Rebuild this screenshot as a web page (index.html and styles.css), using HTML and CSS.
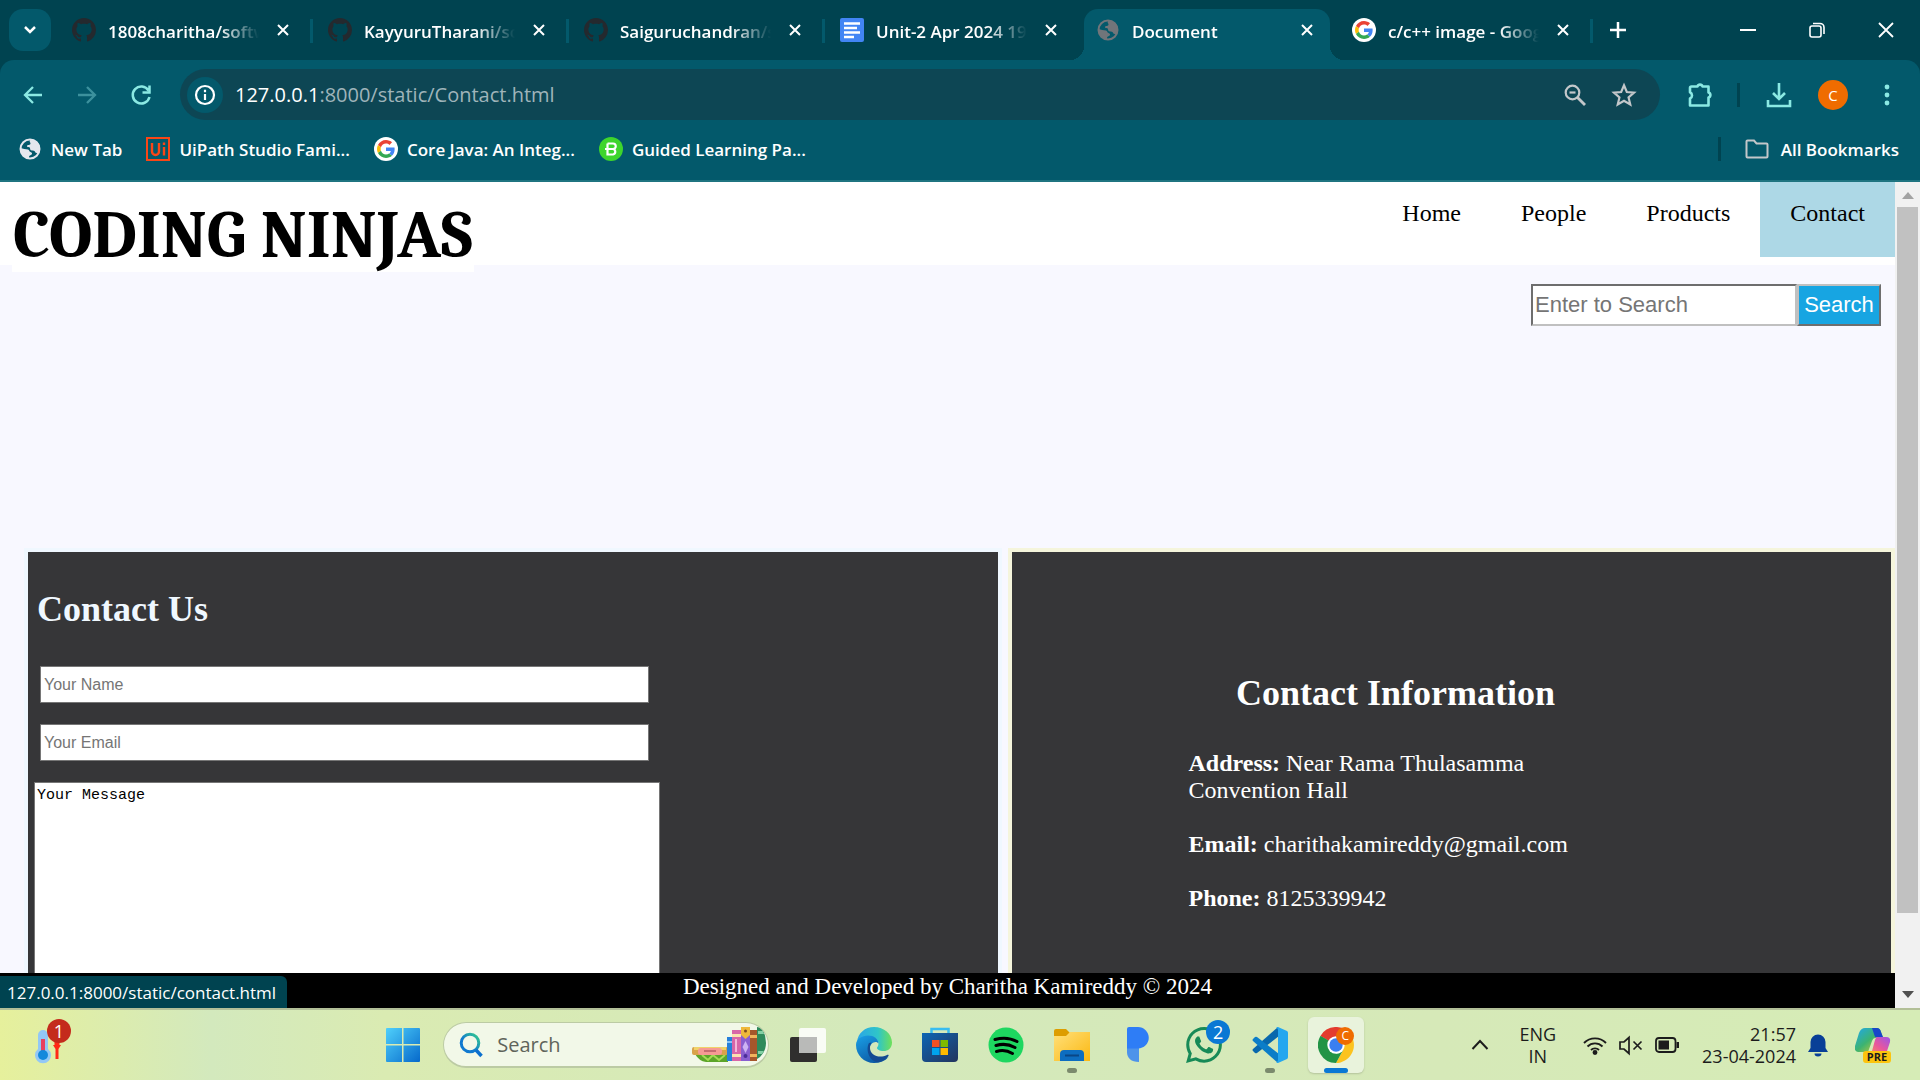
FILE: index.html
```html
<!DOCTYPE html>
<html lang="en">
<head>
<meta charset="utf-8">
<title>Document</title>
<link rel="stylesheet" href="styles.css">
</head>
<body>
<svg class="sprite" aria-hidden="true">
  <symbol id="github" viewBox="0 0 16 16"><path fill="#24292e" d="M8 0C3.58 0 0 3.58 0 8c0 3.54 2.29 6.53 5.47 7.59.4.07.55-.17.55-.38 0-.19-.01-.82-.01-1.49-2.01.37-2.53-.49-2.69-.94-.09-.23-.48-.94-.82-1.13-.28-.15-.68-.52-.01-.53.63-.01 1.08.58 1.23.82.72 1.21 1.87.87 2.33.66.07-.52.28-.87.51-1.07-1.78-.2-3.64-.89-3.64-3.95 0-.87.31-1.59.82-2.15-.08-.2-.36-1.02.08-2.12 0 0 .67-.21 2.2.82.64-.18 1.32-.27 2-.27s1.36.09 2 .27c1.53-1.04 2.2-.82 2.2-.82.44 1.1.16 1.92.08 2.12.51.56.82 1.27.82 2.15 0 3.07-1.87 3.75-3.65 3.95.29.25.54.73.54 1.48 0 1.07-.01 1.93-.01 2.2 0 .21.15.46.55.38A8.01 8.01 0 0 0 16 8c0-4.42-3.58-8-8-8z"/></symbol>
  <symbol id="google" viewBox="0 0 24 24"><circle cx="12" cy="12" r="12" fill="#fff"/><g transform="translate(3 3) scale(.375)"><path fill="#ea4335" d="M24 9.500c3.540 0 6.710 1.220 9.210 3.600l6.850-6.850C35.900 2.380 30.470 0 24 0 14.620 0 6.510 5.380 2.560 13.220l7.980 6.190C12.430 13.720 17.740 9.500 24 9.500z"/><path fill="#4285f4" d="M46.980 24.550c0-1.570-.15-3.090-.38-4.550H24v9.020h12.940c-.58 2.960-2.260 5.480-4.780 7.180l7.730 6c4.510-4.180 7.090-10.360 7.090-17.650z"/><path fill="#fbbc05" d="M10.530 28.590c-.48-1.450-.76-2.990-.76-4.590s.27-3.140.76-4.590l-7.980-6.190C.92 16.460 0 20.120 0 24c0 3.880.92 7.540 2.560 10.780l7.970-6.190z"/><path fill="#34a853" d="M24 48c6.480 0 11.930-2.130 15.890-5.810l-7.730-6c-2.150 1.450-4.920 2.300-8.160 2.300-6.260 0-11.570-4.220-13.470-9.910l-7.980 6.190C6.510 42.620 14.620 48 24 48z"/></g></symbol>
  <symbol id="globe" viewBox="0 0 24 24"><circle cx="12" cy="12" r="9.500" fill="none" stroke="currentColor" stroke-width="2"/><path fill="currentColor" d="M12.500 2.500c5.500 0 9.500 4 9.500 9.500 0 1.500-.5 3-1 4-1.500.5-3.500.3-4-1.200-.5-1.300-1.800-1.300-3-1.300-1.700 0-2-1.500-2-2.500s-1.500-.5-2.500-1c-.8-.5-.5-1.800.5-2 1-.1 2.500 0 2.500-1.500 0-1.300-1-1.500-.8-2.500zM2.500 11c2.500 1 5 1 7.500 1.500 1.500.5 1 2 2.500 2.500 1.500.4 2 1.500 1.200 2.500-1 1-2.700 1-2.700 2.500V21.500C6 21 2.500 17 2.500 11z"/></symbol>
  <symbol id="close" viewBox="0 0 18 18"><path d="M4 4l10 10M14 4L4 14" stroke="currentColor" stroke-width="2" fill="none"/></symbol>
</svg>

<header class="browser">
  <div class="tabstrip">
    <button class="tab-search" aria-label="Search tabs"><svg width="24" height="24" viewBox="0 0 24 24"><path d="M7 9l5 5 5-5" fill="none" stroke="#fff" stroke-width="2.500"/></svg></button>
    <div class="tab"><svg class="favicon"><use href="#github"/></svg><span class="tab-title">1808charitha/software</span><button class="tab-close" aria-label="Close tab"><svg><use href="#close"/></svg></button></div>
    <i class="sep"></i>
    <div class="tab"><svg class="favicon"><use href="#github"/></svg><span class="tab-title">KayyuruTharani/software</span><button class="tab-close" aria-label="Close tab"><svg><use href="#close"/></svg></button></div>
    <i class="sep"></i>
    <div class="tab"><svg class="favicon"><use href="#github"/></svg><span class="tab-title">Saiguruchandran/software</span><button class="tab-close" aria-label="Close tab"><svg><use href="#close"/></svg></button></div>
    <i class="sep"></i>
    <div class="tab"><svg class="favicon" viewBox="0 0 24 24"><rect width="24" height="24" rx="2" fill="#4285f4"/><path d="M4 5.500h16M4 10h13M4 14.500h16M4 19h10" stroke="#fff" stroke-width="2.500"/></svg><span class="tab-title">Unit-2 Apr 2024 19ECS</span><button class="tab-close" aria-label="Close tab"><svg><use href="#close"/></svg></button></div>
    <i class="sep clear"></i>
    <div class="tab active"><svg class="favicon grey"><use href="#globe"/></svg><span class="tab-title">Document</span><button class="tab-close" aria-label="Close tab"><svg><use href="#close"/></svg></button></div>
    <i class="sep clear"></i>
    <div class="tab"><svg class="favicon"><use href="#google"/></svg><span class="tab-title">c/c++ image - Google</span><button class="tab-close" aria-label="Close tab"><svg><use href="#close"/></svg></button></div>
    <i class="sep"></i>
    <button class="new-tab" aria-label="New tab"><svg width="20" height="20" viewBox="0 0 20 20"><path d="M10 2v16M2 10h16" stroke="#fff" stroke-width="2.500"/></svg></button>
    <div class="window-buttons">
      <button aria-label="Minimize"><svg width="16" height="16" viewBox="0 0 16 16"><path d="M0 8h16" stroke="#fff" stroke-width="2"/></svg></button>
      <button aria-label="Restore"><svg width="16" height="16" viewBox="0 0 16 16" fill="none" stroke="#fff" stroke-width="1.600"><rect x="1" y="4" width="11" height="11" rx="2"/><path d="M4 1.500h7a4 4 0 0 1 4 4V12"/></svg></button>
      <button aria-label="Close"><svg width="16" height="16" viewBox="0 0 16 16"><path d="M1 1l14 14M15 1L1 15" stroke="#fff" stroke-width="1.800"/></svg></button>
    </div>
  </div>

  <div class="toolbar">
    <button aria-label="Back"><svg width="24" height="24" viewBox="0 0 24 24"><path d="M21 12H4M12 4l-8 8 8 8" fill="none" stroke="#8be9e3" stroke-width="2.300"/></svg></button>
    <button aria-label="Forward"><svg width="24" height="24" viewBox="0 0 24 24"><path d="M3 12h17M12 4l8 8-8 8" fill="none" stroke="#3c919d" stroke-width="2.300"/></svg></button>
    <button class="reload" aria-label="Reload"><svg width="24" height="24" viewBox="0 0 24 24"><path d="M19.500 7.500A8.500 8.500 0 1 0 20.500 14M20.500 2.500v7h-7" fill="none" stroke="#8be9e3" stroke-width="2.500"/></svg></button>
    <div class="omnibox">
      <span class="info"><svg width="22" height="22" viewBox="0 0 22 22"><circle cx="11" cy="11" r="9" fill="none" stroke="#fff" stroke-width="2.200"/><path d="M11 10v6M11 5.800v2.400" stroke="#fff" stroke-width="2.200"/></svg></span>
      <span class="url"><b>127.0.0.1</b>:8000/static/Contact.html</span>
      <button aria-label="Zoom"><svg width="24" height="24" viewBox="0 0 24 24" fill="none" stroke="#c3c7ca" stroke-width="2.200"><circle cx="9.500" cy="9.500" r="6.800"/><path d="M6.500 9.500h6"/><path d="M14.500 14.500l7.500 7.500" stroke-width="2.800"/></svg></button>
      <button aria-label="Bookmark"><svg width="26" height="26" viewBox="0 0 24 24"><path d="M12 3l2.600 6.200 6.700.6-5.100 4.400 1.600 6.600-5.800-3.500-5.800 3.500 1.600-6.600-5.100-4.400 6.700-.6z" fill="none" stroke="#c3c7ca" stroke-width="2"/></svg></button>
    </div>
    <button class="ext" aria-label="Extensions"><svg width="28" height="28" viewBox="0 0 28 28"><path d="M5.500 5.500H11.500a2.600 2.600 0 0 1 5 0H22.500V11.500a2.600 2.600 0 0 1 0 5V24.500H4V17.500a3.400 3.400 0 0 0 0-6.200V7a1.500 1.500 0 0 1 1.500-1.500z" fill="none" stroke="#8be9e3" stroke-width="2.600" stroke-linejoin="round"/></svg></button>
    <i class="divider"></i>
    <button class="dl" aria-label="Downloads"><svg width="26" height="26" viewBox="0 0 26 26"><path d="M13 1v15M7 11l6 6 6-6M2 18v6h22v-6" fill="none" stroke="#8be9e3" stroke-width="2.600"/></svg></button>
    <button class="avatar" aria-label="Profile">C</button>
    <button class="menu" aria-label="Menu"><svg width="6" height="24" viewBox="0 0 6 24" fill="#8be9e3"><circle cx="3" cy="4" r="2.400"/><circle cx="3" cy="12" r="2.400"/><circle cx="3" cy="20" r="2.400"/></svg></button>
  </div>

  <nav class="bookmarks" aria-label="Bookmarks">
    <a href="#"><svg class="favicon pale"><use href="#globe"/></svg>New Tab</a>
    <a href="#"><svg class="favicon" viewBox="0 0 24 24" fill="none" stroke="#fa4616"><rect x="1" y="1" width="22" height="22" stroke-width="2"/><path d="M6 6v8.500a3.500 3.500 0 0 0 7 0V6M18 10v8.500M18 5.500v2.500" stroke-width="2.400"/></svg>UiPath Studio Fami...</a>
    <a href="#"><svg class="favicon"><use href="#google"/></svg>Core Java: An Integ...</a>
    <a href="#"><svg class="favicon" viewBox="0 0 24 24"><circle cx="12" cy="12" r="12" fill="#3ed52c"/><path d="M8.500 6.500H14a2.700 2.700 0 0 1 0 5.500H6M14 12a2.800 2.800 0 0 1 0 5.500H8.500V6.500" fill="none" stroke="#fff" stroke-width="2.200"/></svg>Guided Learning Pa...</a>
    <i class="divider"></i>
    <a href="#"><svg class="favicon" viewBox="0 0 24 24"><path d="M1.500 4.500a1 1 0 0 1 1-1H9l2.500 3H21.500a1 1 0 0 1 1 1V19.500a1 1 0 0 1-1 1h-19a1 1 0 0 1-1-1z" fill="none" stroke="#c3c7ca" stroke-width="2"/></svg>All Bookmarks</a>
  </nav>
</header>

<div class="viewport">
  <div class="page">
    <header class="site-header">
      <h1 class="brand">CODING NINJAS</h1>
      <nav class="site-nav">
        <a href="#">Home</a><a href="#">People</a><a href="#">Products</a><a href="#" class="current">Contact</a>
      </nav>
    </header>
    <form class="search">
      <input type="text" placeholder="Enter to Search" aria-label="Search the site"><button type="button">Search</button>
    </form>
    <main class="panels">
      <section class="panel form-panel">
        <h2>Contact Us</h2>
        <input type="text" placeholder="Your Name" aria-label="Your Name">
        <input type="email" placeholder="Your Email" aria-label="Your Email">
        <textarea aria-label="Your Message">Your Message</textarea>
      </section>
      <section class="panel info-panel">
        <div class="details">
          <h2>Contact Information</h2>
          <p><strong>Address:</strong> Near Rama Thulasamma Convention Hall</p>
          <p><strong>Email:</strong> charithakamireddy@gmail.com</p>
          <p><strong>Phone:</strong> 8125339942</p>
        </div>
      </section>
    </main>
    <footer class="site-footer">Designed and Developed by Charitha Kamireddy © 2024</footer>
    <div class="status">127.0.0.1:8000/static/contact.html</div>
  </div>
  <div class="scrollbar">
    <svg width="12" height="7" viewBox="0 0 12 7"><path d="M0 7l6-7 6 7z" fill="#a3a3a3"/></svg>
    <div class="track"><div class="thumb"></div></div>
    <svg width="12" height="7" viewBox="0 0 12 7"><path d="M0 0l6 7 6-7z" fill="#505050"/></svg>
  </div>
</div>

<footer class="taskbar">
  <button class="widget" aria-label="Weather"><svg width="40" height="48" viewBox="0 0 40 48"><path d="M3 14a5 5 0 0 1 10 0v14a8 8 0 1 1-10 0z" fill="#93c8f5"/><path d="M6 18h4v14H6z" fill="#e8415e"/><circle cx="8" cy="34" r="5" fill="#1389dc"/><path d="M19.500 20h5v4h-5z" fill="#ff2a16"/><path d="M18 24h8l-2.500 4V38h-3V28z" fill="#ff2a16"/></svg><span class="badge red">1</span></button>

  <div class="apps">
    <button class="app start" aria-label="Start"><svg width="36" height="36" viewBox="0 0 36 36"><defs><linearGradient id="win" x2="1" y2="1"><stop stop-color="#4fd0fb"/><stop offset="1" stop-color="#0669cb"/></linearGradient></defs><path fill="url(#win)" d="M2 1h15v16H1V2a1 1 0 0 1 1-1zM18.500 1H34a1 1 0 0 1 1 1v15H18.500zM1 18.500h16V35H2a1 1 0 0 1-1-1zM18.500 18.500H35V34a1 1 0 0 1-1 1H18.500z"/></svg></button>
    <label class="task-search">
      <svg width="26" height="26" viewBox="0 0 26 26"><defs><linearGradient id="mag" x1="1" x2="0" y2="1"><stop stop-color="#35cf8a"/><stop offset=".6" stop-color="#1079cf"/></linearGradient></defs><circle cx="12" cy="11" r="8.800" fill="none" stroke="url(#mag)" stroke-width="3"/><path d="M18 18l5.500 6" stroke="#0b6fce" stroke-width="3.500"/></svg>
      <input type="text" placeholder="Search">
      <svg width="76" height="40" viewBox="0 0 76 40"><path d="M3 29h33v8H14q-7-1-11-8z" fill="#5da52a"/><path d="M10 30l6 5 5-5 6 5 6-5" fill="none" stroke="#a5dc55" stroke-width="2"/><rect y="22" width="36" height="8" rx="2" fill="#d9a24a"/><rect x="2" y="22" width="32" height="3" fill="#f0d268"/><rect x="6" y="23" width="24" height="7" rx="3" fill="#f69a94"/><rect x="12" y="25" width="12" height="2" fill="#c96b70"/><rect x="35" y="12" width="5" height="24" fill="#2780da"/><rect x="35" y="16" width="5" height="2" fill="#8cc4f5"/><rect x="40" y="5" width="9" height="31" fill="#d866a8"/><rect x="40" y="9" width="9" height="3" fill="#fbe0b0"/><rect x="40" y="29" width="9" height="3" fill="#fbe0b0"/><rect x="43" y="14" width="2" height="13" fill="#f5b6d8"/><rect x="49" y="2" width="9" height="34" fill="#8a5fd0"/><path d="M49 2h9v8l-4.500 4-4.500-4z" fill="#efb83b"/><circle cx="53.500" cy="6" r="1.500" fill="#7b4a20"/><path d="M53.500 16l3 6-3 6-3-6z" fill="#cdb3f3"/><circle cx="53.500" cy="31" r="2" fill="#4b2e9a"/><rect x="58" y="5" width="7" height="31" fill="#a6562b"/><rect x="58" y="10" width="7" height="3" fill="#f1b35c"/><rect x="58" y="29" width="7" height="3" fill="#f1b35c"/><path d="M65 2l5 1q4 7 4 15t-6 14l-3 2z" fill="#2f8a5b"/><path d="M66 6h5l1 3h-6zM66 26h6l-2 3h-4z" fill="#83cfa4"/></svg>
    </label>
    <button class="app" aria-label="Task view"><svg width="36" height="36" viewBox="0 0 36 36"><rect y="10" width="27" height="25" rx="2" fill="#302f2e"/><rect x="9" y="1" width="27" height="25" rx="2" fill="#fff" opacity=".85"/><path d="M9 10h18v16H9z" fill="#b9bab8"/></svg></button>
    <button class="app" aria-label="Edge"><svg width="36" height="36" viewBox="0 0 36 36"><defs><linearGradient id="e1" x2="1"><stop stop-color="#2aa5e8"/><stop offset=".6" stop-color="#2fc5c8"/><stop offset="1" stop-color="#6fe05a"/></linearGradient><linearGradient id="e2" y2="1" x2=".6"><stop stop-color="#1aa0e6"/><stop offset="1" stop-color="#0c59a4"/></linearGradient></defs><path d="M1 15C2 6 9 0 18 0c10 0 18 7 18 15.500 0 6-4 8.500-8.500 8.500-4 0-6.500-1.500-6.500-3 0-1 1.500-1.500 1.500-4.500 0-4-4-7-9-7C8 9.500 3 12 1 15z" fill="url(#e1)"/><path d="M0 18c0-6 6-9.500 12-9.500 6 0 10.500 3.500 10.500 8-2-3.500-9-1-9 6 0 8 9 13 19 7.500C29 34 24 36 18 36 8 36 0 28 0 18z" fill="url(#e2)"/><path d="M13 16c-4 7 1 20 10 19 4-.8 7.500-3 9.500-6 .5-1-.5-1.500-1.500-1-8 4-17 0-17-7 0-2 .5-4 1.500-5.500z" fill="#134a92"/></svg></button>
    <button class="app" aria-label="Store"><svg width="36" height="36" viewBox="0 0 36 36"><defs><linearGradient id="st" y2="1"><stop stop-color="#0d65b4"/><stop offset="1" stop-color="#23345d"/></linearGradient></defs><path d="M9.500 8V2h17v6" fill="none" stroke="#39bdf0" stroke-width="2.500"/><path d="M0 6h36v25a4 4 0 0 1-4 4H4a4 4 0 0 1-4-4z" fill="url(#st)"/><path d="M10 13h7.500v7H10z" fill="#f25022"/><path d="M18.500 13H26v7h-7.500z" fill="#7fba00"/><path d="M10 21h7.500v7H10z" fill="#00a4ef"/><path d="M18.500 21H26v7h-7.500z" fill="#ffb900"/></svg></button>
    <button class="app" aria-label="Spotify"><svg width="36" height="36" viewBox="0 0 36 36"><circle cx="18" cy="18" r="17.500" fill="#1ed760"/><path d="M7 12.500q12-3.500 22 2M8 18.500q10-3 19 2M8.500 24.500q8.500-2.500 16 2" fill="none" stroke="#000" stroke-width="3" stroke-linecap="round"/></svg></button>
    <button class="app running" aria-label="File Explorer"><svg width="36" height="36" viewBox="0 0 36 36"><defs><linearGradient id="fo" x2="1" y2="1"><stop stop-color="#ffe07a"/><stop offset="1" stop-color="#fbb812"/></linearGradient></defs><path d="M0 4q0-2 2-2h10l4 4v7H0z" fill="#dd9d00"/><path d="M0 9h12l4-4h20v29H0z" fill="url(#fo)"/><path d="M6 34V27q0-4 4-4h16q4 0 4 4v7z" fill="#0d6dc0"/><path d="M11 28.500h14" stroke="#0a4685" stroke-width="2"/></svg></button>
    <button class="app" aria-label="P app"><svg width="36" height="36" viewBox="0 0 36 36"><path d="M7 21h12v14C11 35 7 31 7 25z" fill="#4d93ea"/><path d="M9 0h9a10.500 10.500 0 0 1 0 21.500H7V2a2 2 0 0 1 2-2z" fill="#2e7df6"/></svg></button>
    <button class="app" aria-label="WhatsApp"><svg width="36" height="36" viewBox="0 0 24 24"><path fill="#178a57" d="M17.472 14.382c-.297-.149-1.758-.867-2.030-.967-.273-.099-.471-.148-.67.15-.197.297-.767.966-.94 1.164-.173.199-.347.223-.644.075-.297-.150-1.255-.463-2.390-1.475-.883-.788-1.480-1.761-1.653-2.059-.173-.297-.018-.458.130-.606.134-.133.298-.347.446-.520.149-.174.198-.298.298-.497.099-.198.050-.371-.025-.520-.075-.149-.669-1.612-.916-2.207-.242-.579-.487-.5-.669-.510-.173-.008-.371-.010-.570-.010-.198 0-.520.074-.792.372-.272.297-1.040 1.016-1.040 2.479 0 1.462 1.065 2.875 1.213 3.074.149.198 2.096 3.200 5.077 4.487.709.306 1.262.489 1.694.625.712.227 1.360.195 1.871.118.571-.085 1.758-.719 2.006-1.413.248-.694.248-1.289.173-1.413-.074-.124-.272-.198-.570-.347m-5.421 7.403h-.004a9.870 9.870 0 0 1-5.031-1.378l-.361-.214-3.741.982.998-3.648-.235-.374a9.860 9.860 0 0 1-1.510-5.260c.001-5.450 4.436-9.884 9.888-9.884 2.640 0 5.122 1.030 6.988 2.898a9.825 9.825 0 0 1 2.893 6.994c-.003 5.450-4.437 9.884-9.885 9.884m8.413-18.297A11.815 11.815 0 0 0 12.050 0C5.495 0 .160 5.335.157 11.892c0 2.096.547 4.142 1.588 5.945L.057 24l6.305-1.654a11.882 11.882 0 0 0 5.683 1.448h.005c6.554 0 11.890-5.335 11.893-11.893a11.821 11.821 0 0 0-3.480-8.413z"/></svg><span class="badge blue">2</span></button>
    <button class="app running" aria-label="VS Code"><svg width="36" height="36" viewBox="0 0 36 36"><path d="M26 0l1 9L5 26q-1 .5-2 0l-2-2q-1-1 0-2z" fill="#0868ad"/><path d="M26 36l1-9L5 10q-1-.5-2 0l-2 2q-1 1 0 2z" fill="#0b7dc8"/><path d="M26 0l9 4q1 .5 1 2v24q0 1.500-1 2l-9 4q-1 0-2-1 2 0 2-2V3q0-2-2-2 1-1 2-1z" fill="#25a7ef"/></svg></button>
    <button class="app current-app" aria-label="Chrome"><svg width="36" height="36" viewBox="0 0 36 36"><path d="M18 18L2.400 9A18 18 0 0 1 33.600 9z" fill="#e33b2e"/><path d="M18 18L2.400 9A18 18 0 0 0 18 36z" fill="#229446"/><path d="M18 9.300h15.700A18 18 0 0 1 18 36l7.500-13.500z" fill="#fcc31e"/><path d="M2.400 9l8 13.500L18 18z" fill="#229446"/><path d="M10.500 22.300A8.700 8.700 0 0 0 25.500 22.300L18 36z" fill="#229446"/><circle cx="18" cy="18" r="8.700" fill="#fff"/><circle cx="18" cy="18" r="6.700" fill="#3a7ff0"/></svg><span class="badge orange">C</span></button>
  </div>

  <div class="tray">
    <svg width="18" height="18" viewBox="0 0 18 18"><path d="M1.500 13L9 5l7.500 8" fill="none" stroke="#1c1c1c" stroke-width="2"/></svg>
    <span class="lang">ENG<br>IN</span>
    <span class="status-icons">
      <svg width="24" height="24" viewBox="0 0 24 24" fill="none" stroke="#1c1c1c" stroke-width="1.900"><path d="M1 10a15.500 15.500 0 0 1 22 0M4.500 13.500a10.600 10.600 0 0 1 15 0M8 17a5.700 5.700 0 0 1 8 0"/><circle cx="12" cy="19.500" r="1.500" fill="#1c1c1c"/></svg>
      <svg width="24" height="24" viewBox="0 0 24 24" fill="none" stroke="#1c1c1c" stroke-width="1.700"><path d="M1 9h4l5-4.500v16L5 16H1zM14.500 8.500l8 8M22.500 8.500l-8 8"/></svg>
      <svg width="24" height="24" viewBox="0 0 24 24"><rect x="1" y="5" width="19.500" height="14" rx="3" fill="none" stroke="#1c1c1c" stroke-width="1.800"/><path d="M3.500 7.500h10.500v9H3.500zM21.500 9h2.500v6h-2.500z" fill="#1c1c1c"/></svg>
    </span>
    <span class="clock">21:57<br>23-04-2024</span>
    <svg width="20" height="24" viewBox="0 0 20 24"><path d="M2.500 9a7.500 7.500 0 0 1 15 0v6l2.500 4H0l2.500-4zM6.500 20.500h7a3.500 3 0 0 1-7 0z" fill="#083f97"/></svg>
    <svg class="copilot" width="36" height="36" viewBox="0 0 36 36"><defs><linearGradient id="c1" y2="1"><stop stop-color="#1fa7ee"/><stop offset=".5" stop-color="#3cb371"/><stop offset="1" stop-color="#e9ce26"/></linearGradient><linearGradient id="c2" x1="1" x2="0" y2="1"><stop stop-color="#9a56e8"/><stop offset=".5" stop-color="#e9569c"/><stop offset="1" stop-color="#f99a4d"/></linearGradient></defs><path d="M10 1h12q3 0 4 4l2 6h-8q-2 0-3 3l-4 11H3q-4 0-3-6L4 6q2-5 6-5z" fill="url(#c1)"/><path d="M17 1h5q3 0 4 4l2 5h-8z" fill="#1746c9"/><path d="M22 10h9q5 0 4 5l-3 9q-1 4-6 4H12q4-1 5-4l3-11q1-3 2-3z" fill="url(#c2)"/><rect x="8" y="24" width="28" height="12" rx="3" fill="#fcc40e"/><text x="22" y="34" text-anchor="middle" class="pre">PRE</text></svg>
  </div>
</footer>
</body>
</html>
```
FILE: styles.css
```css
* { box-sizing: border-box; }

body {
  margin: 0;
  height: 100vh;
  display: flex;
  flex-direction: column;
  overflow: hidden;
  font-family: "Open Sans", "Noto Sans", sans-serif;
}

button {
  border: 0;
  padding: 0;
  background: none;
  font: inherit;
  display: flex;
  align-items: center;
  justify-content: center;
}

a { color: inherit; text-decoration: none; }
svg { flex: none; }
.sprite { display: none; }

/* Browser frame */
.browser {
  background: #004350;
  color: #fff;
  font-size: 17px;
  font-weight: 600;
}

.tabstrip {
  height: 60px;
  display: flex;
  align-items: flex-end;
}

.tabstrip > * { height: 51px; padding-bottom: 9px; }

.tabstrip > .tab-search {
  width: 42px;
  height: 42px;
  margin: 0 9px;
  padding: 0;
  align-self: center;
  border-radius: 14px;
  background: #03596b;
}

.tab {
  position: relative;
  flex: 0 1 246px;
  min-width: 0;
  display: flex;
  align-items: center;
  padding-left: 12px;
  padding-right: 14px;
  gap: 12px;
}

.tab.active {
  background: #03596b;
  border-radius: 14px 14px 0 0;
}

.tab.active::before,
.tab.active::after {
  content: "";
  position: absolute;
  bottom: 0;
  width: 14px;
  height: 14px;
}

.tab.active::before {
  right: 100%;
  background: radial-gradient(circle at 0 0, transparent 14px, #03596b 14px);
}

.tab.active::after {
  left: 100%;
  background: radial-gradient(circle at 100% 0, transparent 14px, #03596b 14px);
}

.favicon { width: 24px; height: 24px; }
.favicon.grey { color: #71757a; }
.favicon.pale { color: #e4e7ee; }

.tab-title {
  flex: 1;
  min-width: 0;
  padding-top: 3px;
  overflow: hidden;
  white-space: nowrap;
  line-height: 24px;
  -webkit-mask-image: linear-gradient(90deg, #000 72%, transparent 98%);
  mask-image: linear-gradient(90deg, #000 72%, transparent 98%);
}

.tab-close { color: #fff; }
.tab-close svg { width: 18px; height: 18px; }

.tabstrip > .sep {
  width: 3px;
  height: 24px;
  margin: 0 3px 17px 4px;
  padding: 0;
  background: #03596b;
}

.tabstrip > .sep.clear { background: none; }
.new-tab { width: 44px; }

.window-buttons {
  flex: 1;
  display: flex;
  justify-content: flex-end;
}

.window-buttons button { width: 69px; }

.toolbar {
  height: 60px;
  display: flex;
  align-items: center;
  padding: 9px 30px 0 21px;
  border-radius: 14px 14px 0 0;
  background: #03596b;
}

.toolbar > button { width: 24px; margin-right: 30px; }
.toolbar > .reload { margin-right: 27px; }

.omnibox {
  flex: 1;
  height: 51px;
  display: flex;
  align-items: center;
  gap: 24px;
  margin-right: 26px;
  padding: 0 23px 0 7px;
  border-radius: 26px;
  background: #0d4654;
}

.info {
  width: 36px;
  height: 36px;
  display: flex;
  align-items: center;
  justify-content: center;
  border-radius: 50%;
  background: #03596b;
}

.url {
  flex: 1;
  margin-left: -12px;
  font-size: 20px;
  font-weight: 400;
  color: #9fb4ba;
}

.url b { font-weight: 400; color: #fff; }

.divider {
  width: 3px;
  height: 24px;
  background: #004350;
}

.toolbar > .ext { width: 28px; margin-right: 23px; }
.toolbar > .dl { width: 26px; margin: 0 26px; }

.toolbar > .avatar {
  width: 30px;
  height: 30px;
  margin-right: 36px;
  border-radius: 50%;
  background: #ef6c00;
  color: #fff;
  font-size: 15px;
  font-weight: 400;
}

.toolbar > .menu { width: 6px; margin: 0; }

.bookmarks {
  height: 62px;
  display: flex;
  align-items: center;
  gap: 24px;
  padding: 0 21px 2px 18px;
  background: #03596b;
  border-bottom: 2px solid #1f7480;
}

.bookmarks a {
  display: flex;
  align-items: center;
  gap: 9px;
  white-space: nowrap;
}

.bookmarks .divider { margin-left: auto; }
.bookmarks .divider + a { gap: 12px; }

/* Web page */
.viewport {
  flex: 1;
  min-height: 0;
  display: flex;
}

.page {
  position: relative;
  flex: 1;
  min-width: 0;
  display: flex;
  flex-direction: column;
  background: #f8f8ff;
  font-family: "Liberation Serif", "Times New Roman", serif;
  font-size: 24px;
  line-height: 27px;
}

.site-header {
  height: 83px;
  display: flex;
  justify-content: space-between;
  align-items: flex-start;
  background: #fff;
}

.brand {
  margin: 0 0 0 12px;
  padding: 18px 1px 0;
  background: #fff;
  font-family: Cambria, Caladea, "Liberation Serif", serif;
  font-size: 67px;
  line-height: 72px;
  white-space: nowrap;
}

.site-nav { display: flex; }
.site-nav a { height: 75px; padding: 18px 30px; }
.site-nav .current { background: #add8e6; }

.search {
  display: flex;
  justify-content: flex-end;
  margin: 19px 14px 222px;
}

.search input,
.search button {
  height: 42px;
  font-family: "Liberation Sans", Arial, sans-serif;
  font-size: 22px;
  line-height: 36px;
}

.search input {
  width: 266px;
  padding: 0 2px;
  border: 2px solid;
  border-color: #6e6e6e #c0c0c0 #c0c0c0 #6e6e6e;
}

.search button {
  width: 84px;
  border: 2px solid;
  border-color: #c0c0c0 #6e6e6e #6e6e6e #c0c0c0;
  background: #17a5e2;
  color: #fff;
}

input::placeholder { color: #757575; opacity: 1; }

.panels {
  flex: 1;
  min-height: 0;
  display: grid;
  grid-template-columns: 978fr 887fr;
  gap: 6px;
  padding-left: 24px;
}

.panel {
  border: 4px solid #f5f5dc;
  border-bottom: 0;
  background: #363638;
  color: #fff;
}

.panel h2 { margin: 0; font-size: 36px; line-height: 42px; }

.form-panel {
  display: flex;
  flex-direction: column;
  align-items: flex-start;
  padding: 36px 6px 0;
  border-color: #f0f8ff;
}

.form-panel h2 { margin: 0 3px 36px; color: #f0f8ff; }

.form-panel input {
  width: 609px;
  height: 37px;
  margin: 0 6px 21px;
  padding: 0 3px;
  border: 1px solid #767676;
  font-family: "Liberation Sans", Arial, sans-serif;
  font-size: 16px;
}

.form-panel textarea {
  flex: 1;
  width: 626px;
  padding: 3px 2px;
  border: 1px solid #767676;
  border-bottom: 0;
  resize: none;
  font-family: "Liberation Mono", monospace;
  font-size: 15px;
  line-height: 20px;
}

.info-panel { display: flex; justify-content: center; padding: 120px 112px 0 0; }
.details { width: 414px; }
.details h2 { margin-bottom: 36px; text-align: center; }
.details p { margin: 0 0 27px; }

.site-footer {
  height: 35px;
  background: #000;
  color: #fff;
  font-size: 23px;
  text-align: center;
}

.status {
  position: absolute;
  left: 0;
  bottom: 0;
  height: 32px;
  padding: 0 11px 0 7px;
  border-top-right-radius: 6px;
  background: #004350;
  color: #fff;
  font-family: "Open Sans", "Noto Sans", sans-serif;
  font-size: 17px;
  line-height: 33px;
}

.scrollbar {
  width: 25px;
  display: flex;
  flex-direction: column;
  align-items: center;
  gap: 8px;
  padding: 10px 0;
  background: #f1f1f1;
}

.track { flex: 1; width: 21px; }
.thumb { height: 91%; background: #c1c1c1; }

/* Windows taskbar */
.taskbar {
  height: 72px;
  display: flex;
  align-items: center;
  justify-content: space-between;
  padding: 0 29px 0 31px;
  border-top: 2px solid #b2bf97;
  background: linear-gradient(90deg, #e6f09c, #d3e9bd 11%, #daebb2 20%, #d4e9bb 45%, #d6e9b8 75%, #d6ecb6);
}

.widget {
  position: relative;
  width: 247px;
  padding-left: 4px;
  justify-content: flex-start;
}

.badge {
  position: absolute;
  width: 24px;
  height: 24px;
  border-radius: 50%;
  color: #fff;
  font-size: 18px;
  line-height: 24px;
  text-align: center;
}

.badge.red { left: 16px; top: -2px; background: #c42b1c; }
.badge.blue { right: 2px; top: 3px; background: #0a78d4; }
.badge.orange { right: 10px; top: 10px; width: 18px; height: 18px; background: #ef6c00; font-size: 12px; line-height: 18px; }

.apps { display: flex; align-items: center; gap: 10px; }

.app {
  position: relative;
  width: 56px;
  height: 56px;
  border-radius: 6px;
}

.app.start { width: 36px; margin-right: 12px; }

.app.running::after,
.current-app::after {
  content: "";
  position: absolute;
  bottom: 0;
  left: 50%;
  width: 10px;
  height: 5px;
  margin-left: -5px;
  border-radius: 3px;
  background: #7b8a6d;
}

.current-app { background: #e9f3dc; box-shadow: 0 1px 2px #b3c29b; }
.current-app::after { width: 24px; margin-left: -12px; background: #0a78d4; }

.task-search {
  width: 326px;
  height: 46px;
  display: flex;
  align-items: center;
  margin-right: 1px;
  padding-left: 14px;
  border: 1px solid #bccba4;
  border-bottom-width: 2px;
  border-radius: 24px;
  background: #f2f8e8;
  overflow: hidden;
}

.task-search input {
  flex: 1;
  min-width: 0;
  padding: 0 0 0 13px;
  border: 0;
  background: none;
  font-family: inherit;
  font-size: 20px;
}

.task-search input::placeholder { color: #5f645b; }

.tray {
  display: flex;
  align-items: center;
  color: #1c1c1c;
  font-size: 18px;
  line-height: 22px;
}

.lang { margin: 0 27px 0 30px; text-align: center; }
.status-icons { display: flex; gap: 12px; }
.clock { margin: 0 12px 0 23px; text-align: right; }
.copilot { margin-left: 27px; }
.pre { font-size: 11px; font-weight: 700; fill: #1c1c1c; }
```
